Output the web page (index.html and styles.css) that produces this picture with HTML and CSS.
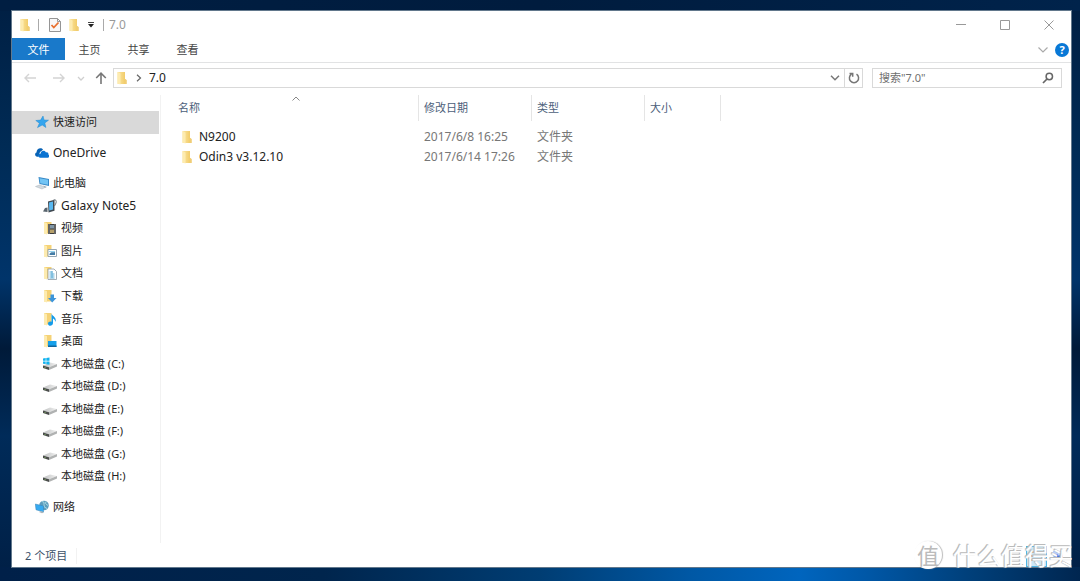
FILE: index.html
```html
<!DOCTYPE html>
<html lang="zh-CN">
<head>
<meta charset="utf-8">
<title>7.0</title>
<link rel="stylesheet" href="styles.css">
</head>
<body>
<svg class="defs" aria-hidden="true">
  <defs>
    <linearGradient id="gold" x1="0" x2="1"><stop offset="0" stop-color="#fbe6a2"/><stop offset="1" stop-color="#f0c75f"/></linearGradient>
    <linearGradient id="steel" x1="0" x2="1"><stop offset="0" stop-color="#bfc1c1"/><stop offset="1" stop-color="#f1f1f1"/></linearGradient>
    <symbol id="folder" viewBox="0 0 12 14">
      <path d="M1.500 1h7.500v7l1.500 1v4h-9z" fill="url(#gold)"/>
      <path d="M1.500 1l3 1.500v11l-3-1z" fill="#fdebb0"/>
      <path d="M9 8l1.500 1v4h-1.500z" fill="#f0cd76"/>
    </symbol>
    <symbol id="base" viewBox="0 0 14 14">
      <path d="M1 1h7.500v11.500H1z" fill="#f5d276"/>
      <path d="M1 1l3 1.200v11.300l-3-1z" fill="#fdebb0"/>
    </symbol>
    <symbol id="drive" viewBox="0 0 14 14">
      <path d="M0 8.500l7-3 7 1.500-8 3.300z" fill="url(#steel)"/>
      <path d="M0 8.500l6 1.800v2.800l-6-2z" fill="#4b4d4c"/>
      <path d="M6 10.300l8-3.300v2.500l-8 3.600z" fill="#b0b2b2"/>
      <path d="M1.500 10.400l1.300.500" stroke="#8fd06a" stroke-width=".7"/>
    </symbol>
  </defs>
</svg>
<main class="window">
  <header class="titlebar">
    <svg class="folder"><use href="#folder"/></svg>
    <span class="bar"></span>
    <button class="quick" aria-label="属性"><svg class="check" viewBox="0 0 14 16"><path d="M1.500 1.500h8l3 3v10h-11z" fill="#f8f8f8" stroke="#959595"/><path d="M9.500 1.500v3h3" fill="none" stroke="#999"/><path d="M3.500 8l2.300 2.500L10.500 5.500" fill="none" stroke="#e8702f" stroke-width="1.800"/></svg></button>
    <button class="quick" aria-label="新建文件夹"><svg class="folder"><use href="#folder"/></svg></button>
    <button class="quick menu" aria-label="自定义快速访问工具栏"><svg class="tiny" viewBox="0 0 6 6"><path d="M0 .5h6" stroke="#444"/><path d="M0 2h6L3 5.500z" fill="#222"/></svg></button>
    <span class="bar near"></span>
    <h1 class="title">7.0</h1>
    <div class="controls">
      <button aria-label="最小化"><svg viewBox="0 0 10 10"><path d="M0 4.500h10" stroke="#999"/></svg></button>
      <button aria-label="最大化"><svg viewBox="0 0 10 10"><path d="M.5.5h9v9h-9z" fill="none" stroke="#999"/></svg></button>
      <button aria-label="关闭"><svg viewBox="0 0 10 10"><path d="M.5.5l9 9M9.500.5l-9 9" stroke="#999"/></svg></button>
    </div>
  </header>
  <div class="ribbon">
    <button class="tab file">文件</button>
    <button class="tab">主页</button>
    <button class="tab">共享</button>
    <button class="tab">查看</button>
    <button class="expand" aria-label="展开功能区"><svg viewBox="0 0 10 6"><path d="M.5.5L5 5 9.500.5" fill="none" stroke="#aaa" stroke-width="1.200"/></svg></button>
    <button class="help" aria-label="帮助">?</button>
  </div>
  <div class="address">
    <button class="nav back" aria-label="返回"><svg viewBox="0 0 12 10"><path d="M12 5H1M5 1L1 5l4 4" fill="none" stroke="#d4d4d4" stroke-width="1.400"/></svg></button>
    <button class="nav forward" aria-label="前进"><svg viewBox="0 0 12 10"><path d="M0 5h11M7 1l4 4-4 4" fill="none" stroke="#d4d4d4" stroke-width="1.400"/></svg></button>
    <button class="nav recent" aria-label="最近的位置"><svg viewBox="0 0 12 10"><path d="M3 4l3 3 3-3" fill="none" stroke="#cfcfcf" stroke-width="1.300"/></svg></button>
    <button class="nav up" aria-label="上移"><svg viewBox="0 0 12 12"><path d="M6 12V1.500M1.200 6L6 1.200 10.800 6" fill="none" stroke="#777" stroke-width="1.600"/></svg></button>
    <div class="path">
      <svg class="folder"><use href="#folder"/></svg>
      <svg class="crumb" viewBox="0 0 6 8"><path d="M1 .8L4.500 4 1 7.200" fill="none" stroke="#666" stroke-width="1.200"/></svg>
      <a href="#">7.0</a>
      <button class="drop" aria-label="以前的位置"><svg viewBox="0 0 10 6"><path d="M1 .8L5 4.800 9 .8" fill="none" stroke="#777" stroke-width="1.500"/></svg></button>
      <button class="reload" aria-label="刷新"><svg viewBox="0 0 12 12"><path d="M8.500 2.200a4.600 4.600 0 1 1-5 0M1.500 1.500h3.200v3.200" fill="none" stroke="#777" stroke-width="1.500"/></svg></button>
    </div>
    <div class="search">
      <input type="text" aria-label="搜索" placeholder='搜索"7.0"'>
      <svg viewBox="0 0 12 12"><circle cx="7.300" cy="4.500" r="3.200" fill="none" stroke="#666" stroke-width="1.500"/><path d="M5 7L1 11" stroke="#666" stroke-width="1.700"/></svg>
    </div>
  </div>
  <div class="body">
    <nav class="tree">
      <a href="#" class="item selected"><svg viewBox="0 0 14 14"><path d="M8 1l1 4 4.500.2-3.700 2.700 1.100 4.600-3.700-2.500L2.500 12.600l1.900-4.400L.8 5.500l4.800-.4z" fill="#35a5ee" stroke="#238bd0" stroke-width=".5"/></svg>快速访问</a>
      <a href="#" class="item apart latin"><svg viewBox="0 0 14 14"><path d="M2.500 10.800C-.5 10.500-.5 7 1.500 6.500 1.500 2.500 6.300 1 8 3.800L5 6 3.500 10.800z" fill="#0862b5"/><path d="M5.300 11.800c-3-.5-2.500-4 .2-4C5.800 4.500 9.700 3.500 11 6.400c2.500-.3 2.500 1.200 2.300 1.900 1.300.9 1 3.500-.8 3.500z" fill="#0a73d2"/></svg>OneDrive</a>
      <a href="#" class="item apart"><svg viewBox="0 0 14 14"><path d="M3.500 1l10.500 2v7L4.500 8z" fill="#3788c6"/><path d="M4.500 2.200l8.500 1.600v5L5.300 7.200z" fill="#72c4f4"/><path d="M.5 10.500l4-1.500 6 2.200-3.500 1.800z" fill="#d3d9de" stroke="#abb5bd" stroke-width=".5"/><path d="M8 9.500l4 1.500-2 .8" fill="#9aa9b4"/></svg>此电脑</a>
      <a href="#" class="item sub latin"><svg viewBox="0 0 14 14"><path d="M5 2.500L11.500.8v11L5.500 13.500z" fill="#404951"/><path d="M6 3.500l4-1v8l-3.800 1z" fill="#58b8f1"/><path d="M0 12.500l2-3.500L4.500 8.500V13z" fill="#59646d"/><path d="M10.500 1q3.500-1 2.500 3l-1.500 3" fill="none" stroke="#6b757c"/></svg>Galaxy Note5</a>
      <a href="#" class="item sub"><svg viewBox="0 0 14 14"><use href="#base"/><path d="M5 3h8v10H5z" fill="#3d3d3d"/><path d="M7 4h4v3.500H7z" fill="#8096a6"/><path d="M7 8.500h4V12H7z" fill="#b6a06a"/><path d="M6 3.500v9M12 3.500v9" stroke="#ddd" stroke-dasharray="1 1"/></svg>视频</a>
      <a href="#" class="item sub"><svg viewBox="0 0 14 14"><use href="#base"/><path d="M5 5.500h8.500v7H5z" fill="#fff" stroke="#96a7b3"/><path d="M6.500 10c2-3 3.500-1 5.500-2v3H6.500z" fill="#437da7"/><path d="M6 7h6v1H6z" fill="#94d3ee"/></svg>图片</a>
      <a href="#" class="item sub"><svg viewBox="0 0 14 14"><use href="#base"/><path d="M5 3h6l2.500 2.500v8H5z" fill="#fff" stroke="#8d9ba5" stroke-width=".8"/><path d="M6.500 6h3M6.500 8h5M6.500 10h5M6.500 12h5M9 5v7" stroke="#4da5d2" stroke-width=".9"/></svg>文档</a>
      <a href="#" class="item sub"><svg viewBox="0 0 14 14"><use href="#base"/><path d="M7.500 5.500h3.500V9h2.500l-4.300 4.500L5 9h2.500z" fill="#3d95da"/></svg>下载</a>
      <a href="#" class="item sub"><svg viewBox="0 0 14 14"><use href="#base"/><path d="M8.500 1.500c.5 2.500 5.500 3.500 4 8.500-.3-2-1.500-3-2.500-3.500V11c0 3.500-5 3.500-5 .7 0-2 2-2.500 3.500-2z" fill="#149be9"/></svg>音乐</a>
      <a href="#" class="item sub"><svg viewBox="0 0 14 14"><use href="#base"/><path d="M5 7h8.500v6H5z" fill="#16a0ea"/><path d="M5 11.500h8.500V13H5z" fill="#13669c"/></svg>桌面</a>
      <a href="#" class="item sub"><svg viewBox="0 0 14 14"><use href="#drive"/><path d="M0 1.500l2.700-.5v2.800H0zM3.300.9L6.500.4v3.400H3.300zM0 4.400h2.700v2.700L0 6.700zM3.300 4.400h3.200v3.300l-3.200-.5z" fill="#10b2ee"/></svg>本地磁盘 (C:)</a>
      <a href="#" class="item sub"><svg><use href="#drive"/></svg>本地磁盘 (D:)</a>
      <a href="#" class="item sub"><svg><use href="#drive"/></svg>本地磁盘 (E:)</a>
      <a href="#" class="item sub"><svg><use href="#drive"/></svg>本地磁盘 (F:)</a>
      <a href="#" class="item sub"><svg><use href="#drive"/></svg>本地磁盘 (G:)</a>
      <a href="#" class="item sub"><svg><use href="#drive"/></svg>本地磁盘 (H:)</a>
      <a href="#" class="item apart"><svg viewBox="0 0 14 14"><circle cx="9" cy="5.500" r="4.800" fill="#5d9dbd"/><path d="M7 1.500q3 0 2 3t3 4M11 1.500q-2 2 2 4" fill="none" stroke="#a9dbe5"/><path d="M.3 4l8.200 2v6L1 9.800z" fill="#36aaf1" stroke="#3882b4" stroke-width=".5"/><path d="M4 12l2-1 3 1.500-2 .8z" fill="#a9b5bc"/></svg>网络</a>
    </nav>
    <section class="files">
      <svg class="sort" viewBox="0 0 8 5"><path d="M.5 4.500L4 1l3.500 3.500" fill="none" stroke="#888"/></svg>
      <table>
        <thead><tr><th class="name">名称</th><th>修改日期</th><th>类型</th><th class="size">大小</th></tr></thead>
        <tbody>
          <tr><td><span class="file-name"><svg class="folder"><use href="#folder"/></svg>N9200</span></td><td>2017/6/8 16:25</td><td>文件夹</td><td></td></tr>
          <tr><td><span class="file-name"><svg class="folder"><use href="#folder"/></svg>Odin3 v3.12.10</span></td><td>2017/6/14 17:26</td><td>文件夹</td><td></td></tr>
        </tbody>
      </table>
    </section>
  </div>
  <footer class="status">
    <span class="count">2 个项目</span>
    <button class="view active" aria-label="详细信息"><svg viewBox="0 0 14 14"><path d="M1 3h3M1 7h3M1 11h3" stroke="#b47840"/><path d="M6 3h7M6 7h7M6 11h7" stroke="#648ca8"/></svg></button>
    <button class="view" aria-label="大图标"><svg viewBox="0 0 14 14"><path d="M2 2h10v7H2z" fill="#b6cfff"/><path d="M2 9l4-4 2 2 4-4v6z" fill="#4679df"/></svg></button>
  </footer>
</main>
<div class="watermark"><span class="seal">值</span><span>什么值得买</span></div>
</body>
</html>
```

FILE: styles.css
```css
* { box-sizing: border-box; }
body {
  margin: 0;
  min-height: 100vh;
  padding: 11px 9px 14px 12px;
  display: flex;
  position: relative;
  font: 11px/16px "Noto Sans", "Noto Sans CJK SC", sans-serif;
  color: #222;
  background:
    linear-gradient(90deg, #002049 0%, #00254d 30%, #003d73 50%, #0058a5 64%, #0065be 74%, #0058a8 80%, #003f79 90%, #002650 100%) bottom / 100% 14px no-repeat,
    linear-gradient(90deg, #001e42, #001c3e 50%, #00234b) top / 100% 11px no-repeat,
    linear-gradient(#001f43, #002b55 25%, #00346a 48%, #001a39 60%, #002b59 75%, #001f45);
}
button { font: inherit; color: inherit; border: 0; background: none; padding: 0; display: flex; align-items: center; justify-content: center; }
a { color: inherit; text-decoration: none; }
svg { flex: none; display: block; }
.defs { position: absolute; width: 0; height: 0; }
.folder { width: 12px; height: 14px; }
.window { flex: 1; min-width: 0; display: flex; flex-direction: column; background: #fff; box-shadow: 0 0 0 1px #62788c; }

.titlebar { display: flex; align-items: center; height: 27px; padding-left: 7px; }
.bar { width: 1px; height: 12px; background: #aaa; margin: 0 9px 0 7px; }
.bar.near { margin: 0 5px 0 9px; }
.quick { margin-right: 6px; }
.quick.menu { margin: 0 0 0 2px; }
.check { width: 14px; height: 16px; }
.tiny { width: 6px; height: 6px; }
.title { margin: 0; font-size: 12px; font-weight: 400; color: #999; }
.controls { margin-left: auto; display: flex; align-self: stretch; }
.controls button { width: 44px; }
.controls svg { width: 10px; height: 10px; }

.ribbon { display: flex; align-items: center; height: 25px; border-bottom: 1px solid #e2e3e4; padding-right: 2px; }
.tab { align-self: flex-start; width: 49px; height: 22px; padding-top: 2px; color: #444; }
.file { width: 53px; color: #fff; background: #1979ca; }
.expand { margin-left: auto; }
.expand svg { width: 10px; height: 6px; }
.help { width: 14px; height: 14px; margin-left: 7px; border-radius: 50%; background: #0878d6; color: #fff; font-weight: 700; }

.address { display: flex; align-items: center; padding: 5px 9px 4px 12px; }
.nav svg { width: 12px; height: 12px; }
.forward { margin-left: 17px; }
.recent { margin-left: 10px; }
.up { margin: 0 6px 0 8px; }
.path { flex: 1; display: flex; align-items: center; height: 20px; border: 1px solid #d9d9d9; padding-left: 2px; margin-right: 9px; }
.path a { font-size: 12px; }
.crumb { width: 6px; height: 8px; margin: 0 7px 0 8px; }
.drop { margin-left: auto; width: 18px; align-self: stretch; }
.drop svg { width: 10px; height: 6px; }
.reload { width: 18px; align-self: stretch; border-left: 1px solid #d9d9d9; }
.reload svg { width: 12px; height: 12px; }
.search { display: flex; align-items: center; width: 190px; height: 20px; border: 1px solid #d9d9d9; padding: 0 7px 0 6px; }
.search input { flex: 1; min-width: 0; font: inherit; border: 0; padding: 0; outline: 0; background: none; }
.search input::placeholder { color: #707070; opacity: 1; }
.search svg { width: 12px; height: 12px; }

.body { flex: 1; display: flex; padding-top: 3px; }
.tree { width: 149px; border-right: 1px solid #f2f2f2; display: flex; flex-direction: column; padding: 16px 1px 25px 0; }
.item { flex: 1; display: flex; align-items: center; gap: 4px; padding-left: 23px; white-space: nowrap; }
.item svg { width: 14px; height: 14px; }
.latin { font-size: 12px; }
.sub { padding-left: 31px; }
.apart { margin-top: 8px; }
.selected { background: #d9d9d9; }

.files { flex: 1; padding-left: 12px; position: relative; }
.sort { position: absolute; left: 131px; top: 1px; width: 8px; height: 5px; }
table { border-collapse: separate; border-spacing: 0; table-layout: fixed; width: 548px; }
th { font-weight: 400; text-align: left; color: #4c607a; height: 26px; padding: 0 0 0 5px; border-right: 1px solid #e5e5e5; width: 113px; }
th.name { width: 246px; }
th.size { width: 76px; }
td { height: 20px; padding: 0 0 0 5px; color: #777; font-size: 12px; white-space: nowrap; }
tbody::before { content: ""; display: block; height: 6px; }
.file-name { display: flex; align-items: center; gap: 6px; padding-left: 3px; color: #222; }

.status { display: flex; align-items: center; height: 24px; padding: 2px 3px 0 13px; }
.count { color: #3c5068; padding-right: 9px; border-right: 1px solid #f2f2f2; margin-right: auto; }
.view { width: 21px; height: 21px; }
.view.active { background: #cce8f7; border: 1px solid #50b5e5; }
.view svg { width: 14px; height: 14px; }

.watermark { position: absolute; right: 7px; bottom: 12px; display: flex; align-items: center; gap: 11px; font: 24px/28px "Noto Sans CJK SC", sans-serif; color: #fff; text-shadow: -1px -1px 0 #bbb, -1px 0 1px #bbb; pointer-events: none; }
.seal { width: 28px; height: 28px; border-radius: 50%; background: #fff; color: #bbb; text-align: center; font-size: 22px; line-height: 26px; text-shadow: none; box-shadow: 1px 0 1px #bbb; }
```
